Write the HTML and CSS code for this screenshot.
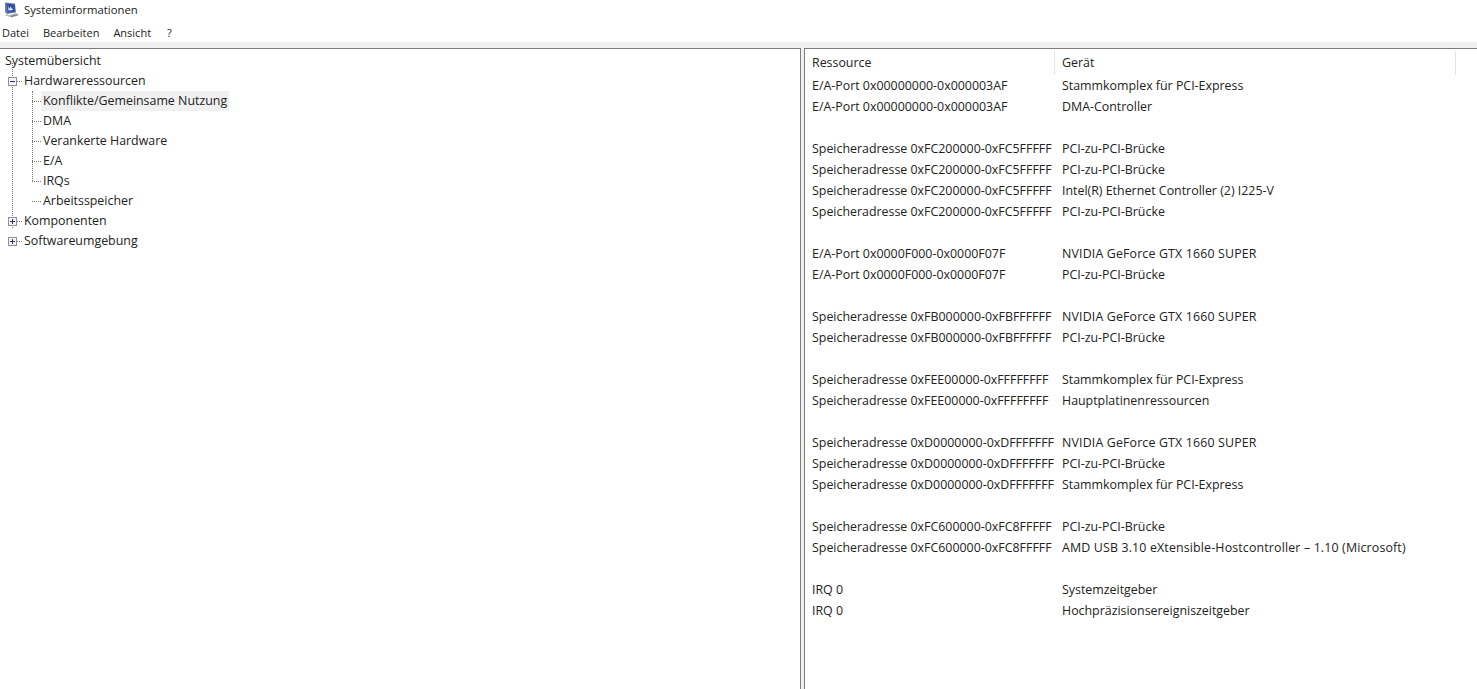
FILE: index.html
```html
<!DOCTYPE html>
<html lang="de">
<head>
<meta charset="utf-8">
<title>Systeminformationen</title>
<link rel="stylesheet" href="styles.css">
</head>
<body>
<header class="titlebar">
  <svg class="appicon" width="16" height="16" viewBox="0 0 16 16"><path d="M2 0.500l10 1 1 9-9 1.500-2-2z" fill="#6d7ea8"/><path d="M3.500 1.800l8 .8.700 6.900-7.700 1z" fill="#2c50b0"/><path d="M5 4l1.500 3 1-2.500 2.500 3.500-4.500.5z" fill="#e4eaf8"/><path d="M3 12l3 1.200 7-2 2 .8.500 1.500-7 2-6-2z" fill="#aeb2bb"/><path d="M8 14l6-1.700.5.800-6.500 1.900z" fill="#6f7480"/></svg>
  <span>Systeminformationen</span>
</header>
<nav class="menubar">
  <span>Datei</span><span>Bearbeiten</span><span>Ansicht</span><span class="help">?</span>
</nav>
<main class="panes">
  <section class="treepane">
    <div class="root">Systemübersicht</div>
    <ul class="tree level1">
      <li class="node">
        <div class="row"><svg class="exp" width="9" height="9" viewBox="0 0 9 9"><rect x=".5" y=".5" width="8" height="8" fill="#f4f4f8" stroke="#8f8f9d"/><path d="M2 4.500h5" stroke="#33335a"/></svg><span>Hardwareressourcen</span></div>
        <ul class="tree level2">
          <li class="leaf"><span class="selected">Konflikte/Gemeinsame Nutzung</span></li>
          <li class="leaf"><span>DMA</span></li>
          <li class="leaf"><span>Verankerte Hardware</span></li>
          <li class="leaf"><span>E/A</span></li>
          <li class="leaf"><span>IRQs</span></li>
          <li class="leaf"><span>Arbeitsspeicher</span></li>
        </ul>
      </li>
      <li class="node">
        <div class="row"><svg class="exp" width="9" height="9" viewBox="0 0 9 9"><rect x=".5" y=".5" width="8" height="8" fill="#f4f4f8" stroke="#8f8f9d"/><path d="M2 4.500h5M4.500 2v5" stroke="#33335a"/></svg><span>Komponenten</span></div>
      </li>
      <li class="node">
        <div class="row"><svg class="exp" width="9" height="9" viewBox="0 0 9 9"><rect x=".5" y=".5" width="8" height="8" fill="#f4f4f8" stroke="#8f8f9d"/><path d="M2 4.500h5M4.500 2v5" stroke="#33335a"/></svg><span>Softwareumgebung</span></div>
      </li>
    </ul>
  </section>
  <section class="listpane">
    <div class="head"><div class="hcell first">Ressource</div><div class="hcell second">Gerät</div></div>
    <div class="rows">
      <div class="r"><span>E/A-Port 0x00000000-0x000003AF</span><span>Stammkomplex für PCI-Express</span></div>
      <div class="r"><span>E/A-Port 0x00000000-0x000003AF</span><span>DMA-Controller</span></div>
      <div class="r"></div>
      <div class="r"><span>Speicheradresse 0xFC200000-0xFC5FFFFF</span><span>PCI-zu-PCI-Brücke</span></div>
      <div class="r"><span>Speicheradresse 0xFC200000-0xFC5FFFFF</span><span>PCI-zu-PCI-Brücke</span></div>
      <div class="r"><span>Speicheradresse 0xFC200000-0xFC5FFFFF</span><span>Intel(R) Ethernet Controller (2) I225-V</span></div>
      <div class="r"><span>Speicheradresse 0xFC200000-0xFC5FFFFF</span><span>PCI-zu-PCI-Brücke</span></div>
      <div class="r"></div>
      <div class="r"><span>E/A-Port 0x0000F000-0x0000F07F</span><span class="wide">NVIDIA GeForce GTX 1660 SUPER</span></div>
      <div class="r"><span>E/A-Port 0x0000F000-0x0000F07F</span><span>PCI-zu-PCI-Brücke</span></div>
      <div class="r"></div>
      <div class="r"><span>Speicheradresse 0xFB000000-0xFBFFFFFF</span><span class="wide">NVIDIA GeForce GTX 1660 SUPER</span></div>
      <div class="r"><span>Speicheradresse 0xFB000000-0xFBFFFFFF</span><span>PCI-zu-PCI-Brücke</span></div>
      <div class="r"></div>
      <div class="r"><span>Speicheradresse 0xFEE00000-0xFFFFFFFF</span><span>Stammkomplex für PCI-Express</span></div>
      <div class="r"><span>Speicheradresse 0xFEE00000-0xFFFFFFFF</span><span>Hauptplatinenressourcen</span></div>
      <div class="r"></div>
      <div class="r"><span>Speicheradresse 0xD0000000-0xDFFFFFFF</span><span class="wide">NVIDIA GeForce GTX 1660 SUPER</span></div>
      <div class="r"><span>Speicheradresse 0xD0000000-0xDFFFFFFF</span><span>PCI-zu-PCI-Brücke</span></div>
      <div class="r"><span>Speicheradresse 0xD0000000-0xDFFFFFFF</span><span>Stammkomplex für PCI-Express</span></div>
      <div class="r"></div>
      <div class="r"><span>Speicheradresse 0xFC600000-0xFC8FFFFF</span><span>PCI-zu-PCI-Brücke</span></div>
      <div class="r"><span>Speicheradresse 0xFC600000-0xFC8FFFFF</span><span class="wide">AMD USB 3.10 eXtensible-Hostcontroller – 1.10 (Microsoft)</span></div>
      <div class="r"></div>
      <div class="r"><span>IRQ 0</span><span>Systemzeitgeber</span></div>
      <div class="r"><span>IRQ 0</span><span>Hochpräzisionsereigniszeitgeber</span></div>
    </div>
  </section>
</main>
</body>
</html>
```
FILE: styles.css
```css
html, body { margin: 0; height: 100%; }
body {
  width: 1477px; height: 689px; overflow: hidden; background: #fff; color: #222;
  font: 12.4px/20px "Open Sans", "Noto Sans", sans-serif;
  display: flex; flex-direction: column;
}
.titlebar { height: 20px; display: flex; align-items: center; gap: 5px; padding-left: 3px; font-size: 11.3px; }
.menubar { height: 22px; display: flex; gap: 14px; padding: 4px 0 0 2px; box-sizing: border-box; align-items: center; font-size: 11px; }
.help { margin-left: 2px; }
.panes { flex: 1; display: flex; min-height: 0; background: #f0f0f0; padding-top: 6px; gap: 3px; }
.treepane, .listpane { background: #fff; border-top: 1px solid #7c7c7c; box-sizing: border-box; }
.treepane { width: 801px; border-right: 1px solid #7c7c7c; padding-top: 2px; }
.listpane { flex: 1; border-left: 1px solid #7c7c7c; padding-left: 5px; padding-top: 1px; }
.root { height: 20px; padding-left: 5px; }
.tree { list-style: none; margin: 0; padding: 0; position: relative; }
.level1 { padding-left: 8px; }
.level1::before { content: ""; position: absolute; left: 12px; top: -8px; height: 165px; border-left: 1px dotted #777; }
.row { height: 20px; display: flex; align-items: center; position: relative; gap: 7px; }
.exp { position: relative; z-index: 1; background: #fff; flex: none; }
.level2 { padding-left: 24px; }
.level2::before { content: ""; position: absolute; left: 24px; top: 0; height: 90px; border-left: 1px dotted #777; }
.leaf { height: 20px; padding-left: 11px; position: relative; }
.leaf::before { content: ""; position: absolute; left: 0; top: 10px; width: 9px; border-top: 1px dotted #777; }
.node > .row::after { content: ""; position: absolute; left: 9px; top: 10px; width: 5px; border-top: 1px dotted #777; }
.selected { display: inline-block; background: #f0f0f0; margin-left: -2px; padding: 0 2px; height: 20px; }
.head { display: flex; height: 25px; box-sizing: border-box; padding-top: 1px; align-items: flex-start; }
.hcell { height: 24px; line-height: 24px; box-sizing: border-box; border-right: 1px solid #e5e5e5; padding-left: 2px; }
.first { width: 245px; }
.second { width: 401px; padding-left: 7px; }
.r { height: 21px; line-height: 21px; display: grid; grid-template-columns: 250px 1fr; padding-left: 2px; white-space: nowrap; }
.wide { letter-spacing: .15px; }
```
